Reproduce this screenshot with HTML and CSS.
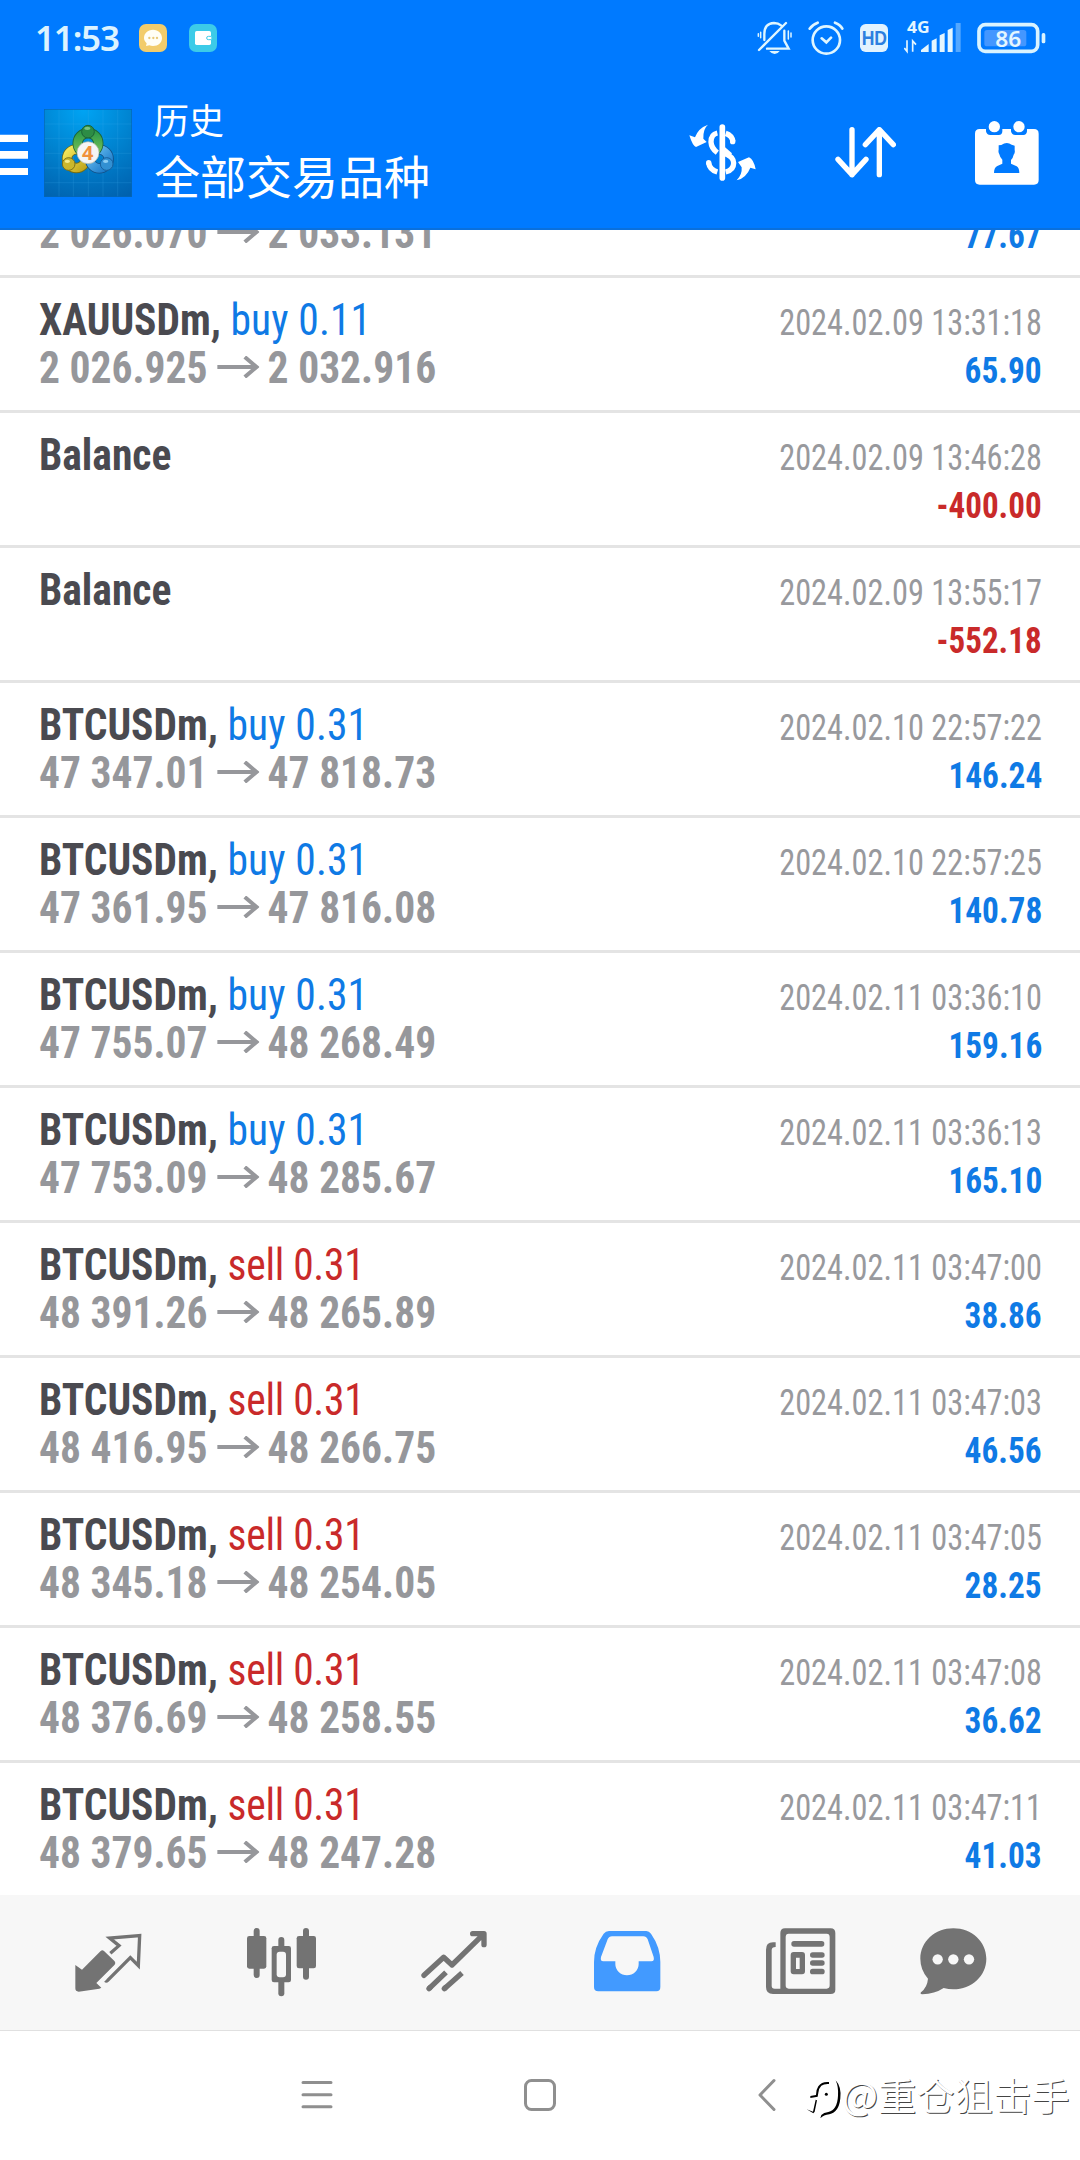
FILE: index.html
```
<!DOCTYPE html>
<html lang="zh-CN">
<head>
<meta charset="utf-8">
<title>历史</title>
<link rel="stylesheet" href="styles.css">
</head>
<body>
<svg class="defs" aria-hidden="true">
  <symbol id="arrow" viewBox="0 0 126 66" preserveAspectRatio="none"><path d="M0 33H112M82 3L117 33L82 63" fill="none" stroke="currentColor" stroke-width="12"/></symbol>
</svg>
<div class="screen">
  <header class="header">
    <div class="status">
      <span class="clock">11:53</span>
      <svg class="app-badge" viewBox="0 0 84 84"><rect width="84" height="84" rx="21" fill="#f2cc6b"/><path d="M42 17c16 0 27 11 27 25S58 66 42 66c-4 0-8-1-11-2l-10 2 2-8c-5-5-8-10-8-16 0-14 11-25 27-25z" fill="#fffef5"/><g fill="#e8c878"><circle cx="31" cy="42" r="3.500"/><circle cx="43" cy="42" r="3.500"/><circle cx="54" cy="42" r="3.500"/></g></svg>
      <svg class="app-badge" viewBox="0 0 84 84"><rect width="84" height="84" rx="21" fill="#3ccbe8"/><rect x="18" y="21" width="48" height="42" rx="5" fill="#fff"/><path d="M67 37H58a5 5 0 0 0 0 10h9" fill="#fff" stroke="#3ccbe8" stroke-width="3"/></svg>
      <div class="status-right">
        <svg width="35" height="35" viewBox="292 60 105 105"><g fill="none" stroke="#dff6ff" stroke-width="7" stroke-linecap="round"><path d="M298 150L379 69M314 120V102Q314 70 343 69Q356 69 364 76M374 92V122L387 146H322"/><path d="M303 97V113M296 101V109M386 93V117M394 99V111" stroke-width="4.500"/></g><path d="M329 153H360Q354 162 345 162T329 153z" fill="#dff6ff"/></svg>
        <svg width="36" height="35" viewBox="443 60 108 105"><g fill="none" stroke="#dff6ff" stroke-width="8" stroke-linecap="round"><circle cx="498" cy="120" r="41"/><path d="M448 86Q456 74 472 68M546 86Q540 74 524 68M484 115L498 127L512 113"/></g></svg>
        <svg width="28" height="35" viewBox="597 60 84 105"><rect x="597" y="72" width="84" height="84" rx="17" fill="#e2f3ff"/><text class="hd" x="602" y="136" textLength="76" lengthAdjust="spacingAndGlyphs">HD</text></svg>
        <svg width="57" height="35" viewBox="733 60 171 105"><text class="net" x="742" y="99" textLength="68" lengthAdjust="spacingAndGlyphs">4G</text><g fill="#e4f6ff"><path d="M784 156V150L807 132V156zM816 156V122L831 115V156zM840 156V106L855 99V156zM864 156V90L879 83V156z"/><rect x="888" y="69" width="15" height="87" fill="#54a8ff"/></g><path d="M742 121V154L734 144M759 155V123L769 134" fill="none" stroke="#e4f6ff" stroke-width="5"/></svg>
        <svg width="69" height="35" viewBox="950 60 207 105"><rect x="956" y="74" width="176" height="80" rx="19" fill="none" stroke="#d9f3ff" stroke-width="11"/><rect x="972" y="90" width="126" height="49" rx="8" fill="#4497ff"/><rect x="1144" y="99" width="11" height="31" rx="5" fill="#d9f3ff"/><text class="pct" x="1005" y="140" textLength="78" lengthAdjust="spacingAndGlyphs">86</text></svg>
      </div>
    </div>
    <div class="toolbar">
      <svg class="menu" width="28" height="42" viewBox="0 0 28 42"><path d="M0 .7h28v7.300H0zM0 17h28v7.700H0zM0 34h28v7H0z" fill="#fff"/></svg>
      <svg class="logo" width="88" height="88" viewBox="0 0 264 264">
        <defs>
          <radialGradient id="bg" cx=".45" cy="0" r="1.100"><stop offset="0" stop-color="#00a4f4"/><stop offset=".5" stop-color="#0083d0"/><stop offset="1" stop-color="#0061ae"/></radialGradient>
          <linearGradient id="gr" x2="0" y2="1"><stop offset="0" stop-color="#2f9c4b"/><stop offset="1" stop-color="#7ac257"/></linearGradient>
          <linearGradient id="ye" x2="1" y2="1"><stop offset="0" stop-color="#f4e75a"/><stop offset="1" stop-color="#c0a51c"/></linearGradient>
          <linearGradient id="bl" x2="1" y2="1"><stop offset="0" stop-color="#6ec4f4"/><stop offset="1" stop-color="#1978c8"/></linearGradient>
        </defs>
        <rect width="264" height="264" fill="url(#bg)"/>
        <path d="M45 0V264M88 0V264M133 0V264M177 0V264M221 0V264M0 45H264M0 88H264M0 133H264M0 177H264M0 221H264" stroke="#44b4ef" stroke-opacity=".28" stroke-width="2"/>
        <rect x="1" y="1" width="262" height="262" fill="none" stroke="#0567b8" stroke-width="2"/>
        <g fill="none" stroke-width="31">
          <circle cx="97" cy="149" r="28" stroke="#6f6c16"/><circle cx="97" cy="149" r="28" stroke="url(#ye)" stroke-width="26"/>
          <circle cx="166" cy="150" r="28" stroke="#124f86"/><circle cx="166" cy="150" r="28" stroke="url(#bl)" stroke-width="26"/>
          <circle cx="132" cy="103" r="31" stroke="#1c6336"/><circle cx="132" cy="103" r="31" stroke="url(#gr)" stroke-width="26"/>
        </g>
        <circle cx="132" cy="68" r="19" fill="#2d8c45" stroke="#1c6336" stroke-width="3"/><ellipse cx="130" cy="58" rx="9" ry="5" fill="#79c283"/>
        <circle cx="74" cy="165" r="19" fill="#cbb72c" stroke="#7b711a" stroke-width="3"/><ellipse cx="70" cy="157" rx="8" ry="5" fill="#f5ec8b"/>
        <circle cx="188" cy="165" r="19" fill="#3290d2" stroke="#18609d" stroke-width="3"/><ellipse cx="185" cy="157" rx="8" ry="5" fill="#8bcdf3"/>
        <circle cx="132" cy="131" r="33" fill="#f5f4f4" stroke="#a7b5a4" stroke-width="2"/>
        <text class="four" x="131" y="152" text-anchor="middle">4</text>
      </svg>
      <div class="titles">
        <div class="title-small">历史</div>
        <div class="title-large">全部交易品种</div>
      </div>
      <div class="actions">
        <svg width="67" height="57" viewBox="86 374 201 171">
          <path d="M143 376Q128 388 129 418L139 428L107 443Q97 440 87 408L104 414Q114 386 143 376zM229 543Q246 526 244 504L233 488L266 474Q280 480 286 510L270 505Q258 536 229 543z" fill="#fff"/>
          <path d="M186 383V536" stroke="#fff" stroke-width="17" stroke-linecap="round"/>
          <path d="M171 401Q152 405 152 428Q153 447 171 460M196 402Q215 408 218 427M145 491Q148 511 171 518M196 463Q220 473 220 491Q220 512 196 518" fill="none" stroke="#fff" stroke-width="16"/>
          <circle cx="217" cy="427" r="8" fill="#fff"/><circle cx="145" cy="490" r="8" fill="#fff"/><path d="M190 440L215 462L205 476L190 468z" fill="#fff"/>
        </svg>
        <svg width="61" height="51" viewBox="523 383 183 153"><path d="M574 391V526M532 480L574 526L616 480M656 526V391M614 436L656 391L698 436" fill="none" stroke="#fff" stroke-width="16" stroke-linecap="round" stroke-linejoin="round"/></svg>
        <svg width="64" height="64" viewBox="945 360 192 192"><path d="M959 384H978V391Q980 402 991 402H1016Q1027 402 1027 391V384H1053V391Q1055 402 1066 402H1090Q1100 402 1101 391V384H1122Q1136 384 1136 398V537Q1136 551 1122 551H959Q945 551 945 537V398Q945 384 959 384z" fill="#fff"/><circle cx="1003" cy="377" r="17" fill="#fff"/><circle cx="1077" cy="377" r="17" fill="#fff"/><path d="M1002 516Q1002 500 1012 495L1027 488V476Q1020 470 1018 460Q1014 454 1016 446V433L1024 432Q1040 421 1055 431L1064 434V447Q1066 455 1061 461Q1059 471 1053 477V488L1070 496Q1078 501 1078 516z" fill="#007aff"/></svg>
      </div>
    </div>
  </header>

  <main class="list">
    <div class="row"><div class="line"><b class="sym">XAUUSDm, <i class="buy">buy 0.11</i></b><time>2024.02.09 13:31:15</time></div><div class="line"><b class="price">2 026.070<svg><use href="#arrow"/></svg>2 033.131</b><b class="amt">77.67</b></div></div>
    <div class="row"><div class="line"><b class="sym">XAUUSDm, <i class="buy">buy 0.11</i></b><time>2024.02.09 13:31:18</time></div><div class="line"><b class="price">2 026.925<svg><use href="#arrow"/></svg>2 032.916</b><b class="amt">65.90</b></div></div>
    <div class="row"><div class="line"><b class="sym">Balance</b><time>2024.02.09 13:46:28</time></div><div class="line"><b class="amt neg">-400.00</b></div></div>
    <div class="row"><div class="line"><b class="sym">Balance</b><time>2024.02.09 13:55:17</time></div><div class="line"><b class="amt neg">-552.18</b></div></div>
    <div class="row"><div class="line"><b class="sym">BTCUSDm, <i class="buy">buy 0.31</i></b><time>2024.02.10 22:57:22</time></div><div class="line"><b class="price">47 347.01<svg><use href="#arrow"/></svg>47 818.73</b><b class="amt">146.24</b></div></div>
    <div class="row"><div class="line"><b class="sym">BTCUSDm, <i class="buy">buy 0.31</i></b><time>2024.02.10 22:57:25</time></div><div class="line"><b class="price">47 361.95<svg><use href="#arrow"/></svg>47 816.08</b><b class="amt">140.78</b></div></div>
    <div class="row"><div class="line"><b class="sym">BTCUSDm, <i class="buy">buy 0.31</i></b><time>2024.02.11 03:36:10</time></div><div class="line"><b class="price">47 755.07<svg><use href="#arrow"/></svg>48 268.49</b><b class="amt">159.16</b></div></div>
    <div class="row"><div class="line"><b class="sym">BTCUSDm, <i class="buy">buy 0.31</i></b><time>2024.02.11 03:36:13</time></div><div class="line"><b class="price">47 753.09<svg><use href="#arrow"/></svg>48 285.67</b><b class="amt">165.10</b></div></div>
    <div class="row"><div class="line"><b class="sym">BTCUSDm, <i class="sell">sell 0.31</i></b><time>2024.02.11 03:47:00</time></div><div class="line"><b class="price">48 391.26<svg><use href="#arrow"/></svg>48 265.89</b><b class="amt">38.86</b></div></div>
    <div class="row"><div class="line"><b class="sym">BTCUSDm, <i class="sell">sell 0.31</i></b><time>2024.02.11 03:47:03</time></div><div class="line"><b class="price">48 416.95<svg><use href="#arrow"/></svg>48 266.75</b><b class="amt">46.56</b></div></div>
    <div class="row"><div class="line"><b class="sym">BTCUSDm, <i class="sell">sell 0.31</i></b><time>2024.02.11 03:47:05</time></div><div class="line"><b class="price">48 345.18<svg><use href="#arrow"/></svg>48 254.05</b><b class="amt">28.25</b></div></div>
    <div class="row"><div class="line"><b class="sym">BTCUSDm, <i class="sell">sell 0.31</i></b><time>2024.02.11 03:47:08</time></div><div class="line"><b class="price">48 376.69<svg><use href="#arrow"/></svg>48 258.55</b><b class="amt">36.62</b></div></div>
    <div class="row"><div class="line"><b class="sym">BTCUSDm, <i class="sell">sell 0.31</i></b><time>2024.02.11 03:47:11</time></div><div class="line"><b class="price">48 379.65<svg><use href="#arrow"/></svg>48 247.28</b><b class="amt">41.03</b></div></div>
  </main>

  <nav class="tabs">
    <div class="tab"><svg width="67" height="70" viewBox="45 50 201 210"><path d="M46 164L66 178L122 122Q127 118 132 122L164 153Q168 158 164 163L109 218L124 232L118 235L56 244Q46 244 46 234z" fill="#737373"/><path d="M151 129L177 106L149 83L239 76L235 166L211 142L143 210Q139 214 136 211" fill="none" stroke="#737373" stroke-width="10"/></svg></div>
    <div class="tab"><svg width="70" height="70" viewBox="560 50 210 210"><g fill="#737373"><rect x="560" y="77" width="58" height="98" rx="7"/><rect x="580" y="53" width="18" height="150" rx="9"/><rect x="709" y="77" width="58" height="97" rx="7"/><rect x="728" y="53" width="18" height="155" rx="9"/><rect x="634" y="107" width="58" height="109" rx="7"/><rect x="654" y="80" width="18" height="178" rx="9"/></g><rect x="649" y="124" width="28" height="77" rx="9" fill="#f7f7f7"/></svg></div>
    <div class="tab"><svg width="67" height="70" viewBox="63 50 201 210"><g fill="none" stroke="#737373" stroke-width="16" stroke-linecap="round"><path d="M72 195L131 141L156 164L250 72M218 70H252V103" stroke-linejoin="round"/><path d="M87 235L138 186M133 235L186 188" stroke-linecap="butt"/><path d="M87 235L90 232M133 235L136 232"/></g></svg></div>
    <div class="tab"><svg width="67" height="70" viewBox="583 50 201 210"><path fill-rule="evenodd" d="M628 62H740Q748 62 754 70Q782 110 782 155V230Q782 243 770 243H596Q583 243 583 230V155Q583 110 612 70Q618 62 628 62zM637 78Q628 78 624 87L604 140Q601 153 611 153H647V161A35 34 0 0 0 717 161V153H755Q765 153 762 140L744 87Q740 78 731 78z" fill="#429aff"/></svg></div>
    <div class="tab"><svg width="70" height="70" viewBox="49 50 210 210"><path fill-rule="evenodd" d="M106 54H243Q257 54 257 68V238Q257 251 243 251H70Q49 251 49 230V118Q49 96 70 96H78V110Q66 110 66 120V226Q66 235 75 235H92V68Q92 54 106 54zM117 70Q108 70 108 80V225Q108 235 117 235H231Q240 235 240 225V80Q240 70 231 70z" fill="#737373"/><g fill="#737373"><rect x="125" y="92" width="99" height="17" rx="8"/><rect x="181" y="126" width="44" height="16" rx="8"/><rect x="181" y="150" width="44" height="16" rx="8"/><rect x="181" y="175" width="44" height="17" rx="8"/><path fill-rule="evenodd" d="M132 125H157Q166 125 166 134V183Q166 192 157 192H132Q123 192 123 183V134Q123 125 132 125zM139 142V176H150V142z"/></g></svg></div>
    <div class="tab tab-last"><svg width="67" height="70" viewBox="509 50 201 210"><path fill="#737373" d="M609 54C664 54 708 94 708 145S664 237 609 237Q594 237 580 233Q553 251 516 252Q508 251 512 246Q531 230 533 205Q510 179 510 145C510 94 554 54 609 54z"/><g fill="#f7f7f7"><circle cx="562" cy="147" r="15.500"/><circle cx="609" cy="147" r="15.500"/><circle cx="656" cy="147" r="15.500"/></g></svg></div>
  </nav>

  <footer class="sysnav">
    <svg width="32" height="32" viewBox="0 0 32 32"><path d="M2 3.500H30M2 15.700H30M2 27.700H30"/></svg>
    <svg width="34" height="34" viewBox="0 0 34 34"><rect x="2.500" y="2.500" width="29" height="29" rx="6"/></svg>
    <svg width="20" height="34" viewBox="0 0 20 34"><path d="M17 2.500L3 17L17 31.500"/></svg>
    <div class="mark">
      <svg width="36" height="40" viewBox="195 72 108 120"><path d="M264 81Q242 79 232 94Q224 106 225 120L208 123V129L230 125L232 113Q233 100 241 92Q249 86 264 87zM224 134L216 170L197 163L217 175L221 170L228 136zM238 190L241 180Q248 173 262 171Q289 164 291 122Q293 96 284 76Q302 96 298 130Q294 172 265 178Q248 180 238 190z"/><circle cx="256" cy="118" r="4.500"/></svg>
      <span>@重仓狙击手</span>
    </div>
  </footer>
</div>
</body>
</html>
```
FILE: styles.css
```
* { box-sizing: border-box; }
body { margin: 0; background: #fff; font-family: Roboto, "Noto Sans CJK SC", sans-serif; }
svg { display: block; flex: none; }
.defs { position: absolute; width: 0; height: 0; }
.screen { width: 1080px; height: 2160px; display: flex; flex-direction: column; overflow: hidden; }

.header { height: 230px; flex: none; background: #007aff; border-bottom: 2px solid #0a70dc; color: #fff; }
.status { height: 76px; display: flex; align-items: flex-start; padding: 20px 34px 0 35px; }
.clock { width: 104px; margin-top: -6px; font: 600 35px/48px "Noto Sans", sans-serif; letter-spacing: -1.2px; color: #dcf3ff; }
.app-badge { width: 28px; height: 28px; margin: 4px 22px 0 0; }
.status-right { margin-left: auto; display: flex; gap: 16px; }
.hd { font: 700 58px "Liberation Sans", sans-serif; fill: #2c7fe0; }
.net { font: 700 46px "Noto Sans", sans-serif; fill: #e4f6ff; }
.pct { font: 600 66px "Noto Sans", sans-serif; fill: #e4f6ff; }

.toolbar { height: 153px; display: flex; align-items: center; }
.menu { margin-top: 4px; }
.logo { margin-left: 16px; }
.four { font: 700 60px "Noto Sans", sans-serif; fill: #f0913c; }
.titles { margin: -5px 0 0 22px; font-family: "Noto Sans CJK SC", sans-serif; font-weight: 400; }
.title-small { font-size: 35px; line-height: 48px; }
.title-large { font-size: 46px; line-height: 62px; }
.actions { margin-left: auto; padding-right: 41px; display: flex; align-items: center; gap: 79px; }

.list { height: 1665px; flex: none; overflow: hidden; }
.row { height: 135px; padding: 18px 38px 0 39px; border-bottom: 3px solid #e4e4e4; font-stretch: 75%; }
.row:first-child { margin-top: -87px; }
.line { height: 48px; display: flex; align-items: baseline; line-height: 48px; white-space: pre; }
.line::before { content: "\200b"; font-size: 45px; }
.sym, .price { font-size: 45px; transform: scaleX(.923); transform-origin: left; }
.sym { color: #4a4a50; }
.sym i { font-style: normal; font-weight: 400; }
.buy { color: #0f7ae5; letter-spacing: .1px; }
.sell { color: #c92a2a; letter-spacing: -.3px; }
.price { color: #96979b; }
.price svg { display: inline-block; width: 46px; height: 22px; margin: 0 9px 0 10px; vertical-align: 5px; }
time, .amt { margin-left: auto; font-size: 37px; transform-origin: right; }
time { color: #98999d; transform: scaleX(.873); }
.amt { color: #0f7ae5; transform: scaleX(.9); }
.neg { color: #c92a2a; transform: scaleX(.893); }

.tabs { height: 135px; flex: none; display: flex; align-items: center; padding: 0 0 2px 22px; background: #f7f7f7; }
.tab { width: 173px; display: flex; justify-content: center; }
.tab-last { width: 132px; }

.sysnav { position: relative; height: 130px; flex: none; display: flex; align-items: center; padding: 0 0 2px 301px; border-top: 1px solid #e0e0e0; fill: none; stroke: #8f8f8f; stroke-width: 3; stroke-linecap: round; stroke-linejoin: round; }
.sysnav > svg + svg { margin-left: 190px; }
.sysnav > svg:nth-of-type(3) { margin-left: 200px; }
.mark { position: absolute; left: 806px; top: 48px; display: flex; align-items: center; stroke: none; fill: #000; }
.mark span { margin-top: -10px; font: 400 38px/48px "Noto Sans CJK SC", sans-serif; letter-spacing: .3px; color: #fff; text-shadow: 1px 1px 0 #444; white-space: nowrap; }
```
